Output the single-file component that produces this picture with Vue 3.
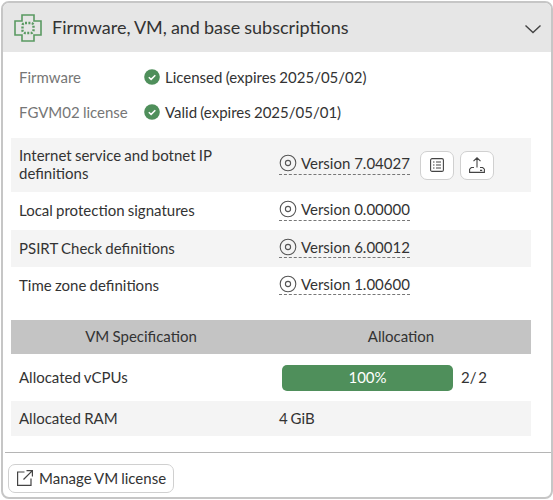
<script setup>
const licenses = [
  { label: 'Firmware', text: 'Licensed (expires 2025/05/02)' },
  { label: 'FGVM02 license', text: 'Valid (expires 2025/05/01)' },
]
const defs = [
  { label: 'Internet service and botnet IP definitions', version: 'Version 7.04027', actions: true },
  { label: 'Local protection signatures', version: 'Version 0.00000' },
  { label: 'PSIRT Check definitions', version: 'Version 6.00012' },
  { label: 'Time zone definitions', version: 'Version 1.00600' },
]
</script>

<template>
  <div class="card">
    <header class="head">
      <svg class="chip" width="30" height="30" viewBox="0 0 30 30" fill="none" stroke="#5a9a62" stroke-width="1.600">
        <path d="M9 2h12v6h7v14h-7v6H9v-6H2V8h7z" />
        <rect x="9.500" y="10" width="11" height="10" rx="2.500" stroke-dasharray="2 1.400" stroke-width="2.400" />
      </svg>
      <h2 class="title">Firmware, VM, and base subscriptions</h2>
      <svg class="chev" width="18" height="10" viewBox="0 0 18 10" fill="none" stroke="#444" stroke-width="1.400">
        <path d="M1.500 1.500 9 8.500l7.500-7" />
      </svg>
    </header>

    <div class="body">
      <div class="licenses">
        <div v-for="l in licenses" :key="l.label" class="lic">
          <span class="lic-label">{{ l.label }}</span>
          <svg width="16" height="16" viewBox="0 0 16 16">
            <circle cx="8" cy="8" r="7.800" fill="#4f8f5b" />
            <path d="M4.800 8.200l2.300 2.200 4.200-4.200" fill="none" stroke="#fff" stroke-width="1.500" />
          </svg>
          <span class="lic-text">{{ l.text }}</span>
        </div>
      </div>

      <div class="defs">
        <div v-for="d in defs" :key="d.label" class="def" :class="{ tall: d.actions }">
          <div class="def-label">{{ d.label }}</div>
          <div class="def-value">
            <span class="version">
              <svg width="18" height="18" viewBox="0 0 18 18" fill="none" stroke="#555" stroke-width="1.100">
                <circle cx="9" cy="9" r="7.800" />
                <circle cx="9" cy="9" r="2.600" />
              </svg>
              {{ d.version }}
            </span>
            <template v-if="d.actions">
              <button class="icon-btn first" type="button" aria-label="Details">
                <svg width="14" height="14" viewBox="0 0 14 14" fill="none" stroke="#444" stroke-width="1.100">
                  <rect x="0.600" y="0.600" width="12.800" height="12.800" rx="1.500" />
                  <path d="M3 4h1.500M6 4h5M3 7h1.500M6 7h5M3 10h1.500M6 10h5" />
                </svg>
              </button>
              <button class="icon-btn" type="button" aria-label="Upload">
                <svg width="16" height="16" viewBox="0 0 16 16" fill="none" stroke="#444" stroke-width="1.100">
                  <path d="M8 10.500V0.800M4.500 4.200 8 0.800l3.500 3.400M5 10.500H2.300L0.600 12.200v3.200h14.800v-3.200L13.700 10.500H11" />
                  <path d="M11 13.400h2.200" />
                </svg>
              </button>
            </template>
          </div>
        </div>
      </div>

      <div class="spec">
        <div class="spec-head">
          <span>VM Specification</span>
          <span>Allocation</span>
        </div>
        <div class="spec-row cpu">
          <div class="spec-label">Allocated vCPUs</div>
          <div class="spec-value">
            <div class="bar">100%</div>
            <span class="count">2/ 2</span>
          </div>
        </div>
        <div class="spec-row ram">
          <div class="spec-label">Allocated RAM</div>
          <div class="spec-value tiny">4 GiB</div>
        </div>
      </div>
    </div>

    <footer class="foot">
      <button class="manage" type="button">
        <svg width="16" height="16" viewBox="0 0 16 16" fill="none" stroke="#444" stroke-width="1.200">
          <path d="M7.500 2H0.600v13.400H14V8.500M6.500 9.500 15.400 0.600M9.500 0.600h5.900v5.900" />
        </svg>
        Manage VM license
      </button>
    </footer>
  </div>
</template>

<style>
html, body { margin: 0; background: #fff; }
</style>

<style scoped>
.card {
  box-sizing: border-box;
  width: 552px;
  height: 498px;
  margin: 1px 0 0 1px;
  border: 2px solid #c6c6c6;
  border-radius: 8px;
  overflow: hidden;
  font-family: Lato, sans-serif;
  font-size: 15px;
  word-spacing: -0.6px;
  color: #333;
  display: flex;
  flex-direction: column;
}
.head {
  height: 49px;
  flex: none;
  background: #e6e6e6;
  display: flex;
  align-items: center;
  padding: 0 9px 0 10px;
  box-sizing: border-box;
}
.chip { flex: none; }
.title {
  flex: 1;
  margin: 0 0 0 9px;
  padding-bottom: 2px;
  font-size: 18px;
  font-weight: 400;
  color: #333;
}
.chev { margin-top: 2px; }
.body {
  padding: 7px 20px 0 8px;
  flex: 1;
}
.licenses { padding-left: 8px; }
.lic {
  height: 35px;
  display: flex;
  align-items: center;
}
.lic-label { width: 125px; color: #767676; }
.lic-text { margin-left: 5px; }
.defs { margin-top: 9px; }
.def {
  height: 37px;
  display: flex;
  align-items: center;
  padding-left: 8px;
}
.def:nth-child(odd) { background: #f4f4f4; }
.def:nth-child(2) { height: 38px; }
.def.tall { height: 54px; }
.def-label {
  width: 260px;
  line-height: 18px;
  padding: 0 30px 2px 0;
  box-sizing: border-box;
}
.def-value { display: flex; align-items: center; }
.version {
  display: inline-flex;
  align-items: center;
  gap: 4px;
  height: 22px;
  margin-bottom: 3px;
  box-sizing: border-box;
  border-bottom: 1px dashed #777;
  word-spacing: 0;
}
.icon-btn {
  box-sizing: border-box;
  width: 34px;
  height: 29px;
  margin-left: 6px;
  padding: 0;
  background: #fff;
  border: 1px solid #d0d0d0;
  border-radius: 7px;
  display: flex;
  align-items: center;
  justify-content: center;
}
.icon-btn.first { margin-left: 10px; }
.spec { margin-top: 16px; }
.spec-head {
  height: 34px;
  padding-bottom: 2px;
  box-sizing: border-box;
  background: #c4c4c4;
  display: grid;
  grid-template-columns: 260px 1fr;
  align-items: center;
  text-align: center;
}
.spec-row {
  display: grid;
  grid-template-columns: 260px 1fr;
  align-items: center;
}
.spec-label { padding: 0 0 2px 8px; }
.cpu { height: 47px; }
.ram { height: 35px; background: #f4f4f4; }
.spec-value { display: flex; align-items: center; gap: 8px; padding-left: 8px; }
.cpu .spec-value { padding-left: 11px; }
.tiny { padding-bottom: 2px; word-spacing: -1px; }
.count { word-spacing: -2px; padding-bottom: 2px; }
.bar {
  width: 171px;
  height: 26px;
  line-height: 24px;
  border-radius: 5px;
  background: #4f8f5b;
  color: #fff;
  text-align: center;
}
.foot {
  flex: none;
  height: 45px;
  margin-left: 2px;
  border-top: 1px solid #b5b5b5;
  box-sizing: border-box;
  padding-top: 11px;
}
.manage {
  box-sizing: border-box;
  width: 166px;
  height: 29px;
  margin-left: 3px;
  padding: 0 0 1px 8px;
  background: #fff;
  border: 1px solid #d0d0d0;
  border-radius: 7px;
  font: inherit;
  word-spacing: -0.800px;
  color: #333;
  display: flex;
  align-items: center;
  gap: 6px;
}
</style>
